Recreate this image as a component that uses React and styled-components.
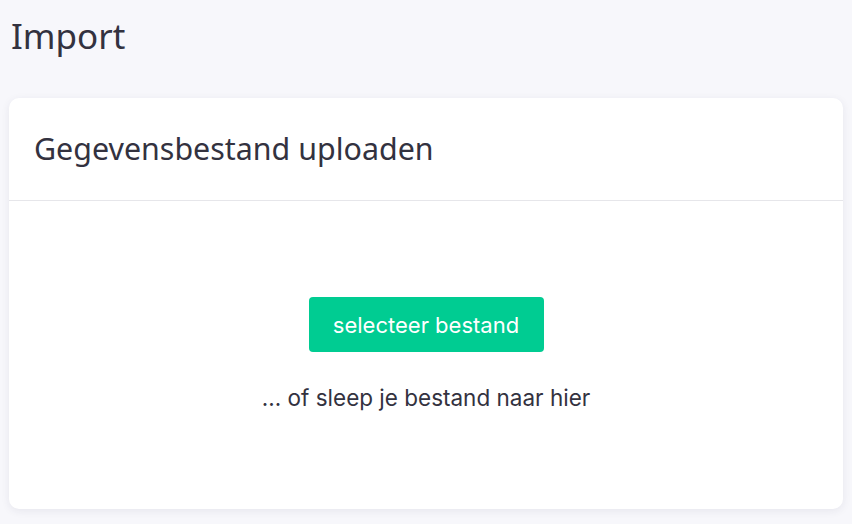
import React from "react";
import styled, { createGlobalStyle } from "styled-components";

const Global = createGlobalStyle`
  html, body {
    margin: 0;
    padding: 0;
    background: #f7f7fb;
  }
`;

const Import = () => {
  return (
    <Page>
      <Global />
      <Title>Import</Title>
      <Card>
        <CardHeader>
          <h2>Gegevensbestand uploaden</h2>
        </CardHeader>
        <DropZone>
          <button>selecteer bestand</button>
          <p>... of sleep je bestand naar hier</p>
        </DropZone>
      </Card>
    </Page>
  );
};

const Page = styled.div`
  padding: 14px 9px 15px 9px;
  min-height: 524px;
  box-sizing: border-box;
`;

const Title = styled.h1`
  margin: 0 0 0 2px;
  height: 84px;
  font-family: "Noto Sans", sans-serif;
  font-weight: 400;
  font-size: 35px;
  line-height: 44px;
  color: #33323f;
`;

const Card = styled.div`
  background: #fff;
  border-radius: 10px;
  box-shadow: 0 2px 8px rgba(40, 40, 80, 0.08);
  overflow: hidden;
`;

const CardHeader = styled.div`
  height: 103px;
  padding: 0 25px 2px;
  box-sizing: border-box;
  border-bottom: 1px solid #e6e6ea;
  display: flex;
  align-items: center;

  h2 {
    margin: 0;
    font-family: "Noto Sans", sans-serif;
    font-weight: 400;
    font-size: 30.4px;
    color: #33323f;
  }
`;

const DropZone = styled.div`
  height: 308px;
  display: flex;
  flex-direction: column;
  align-items: center;
  padding-top: 96px;
  box-sizing: border-box;

  button {
    border: none;
    outline: none;
    background: #00cc92;
    color: #fff;
    width: 235px;
    height: 55px;
    border-radius: 4px;
    font-family: "Inter", sans-serif;
    font-weight: 400;
    font-size: 22px;
    cursor: pointer;
  }

  p {
    margin: 32px 0 0 0;
    font-family: "Inter", sans-serif;
    font-size: 22.5px;
    line-height: 27px;
    color: #33323f;
  }
`;

export default Import;
